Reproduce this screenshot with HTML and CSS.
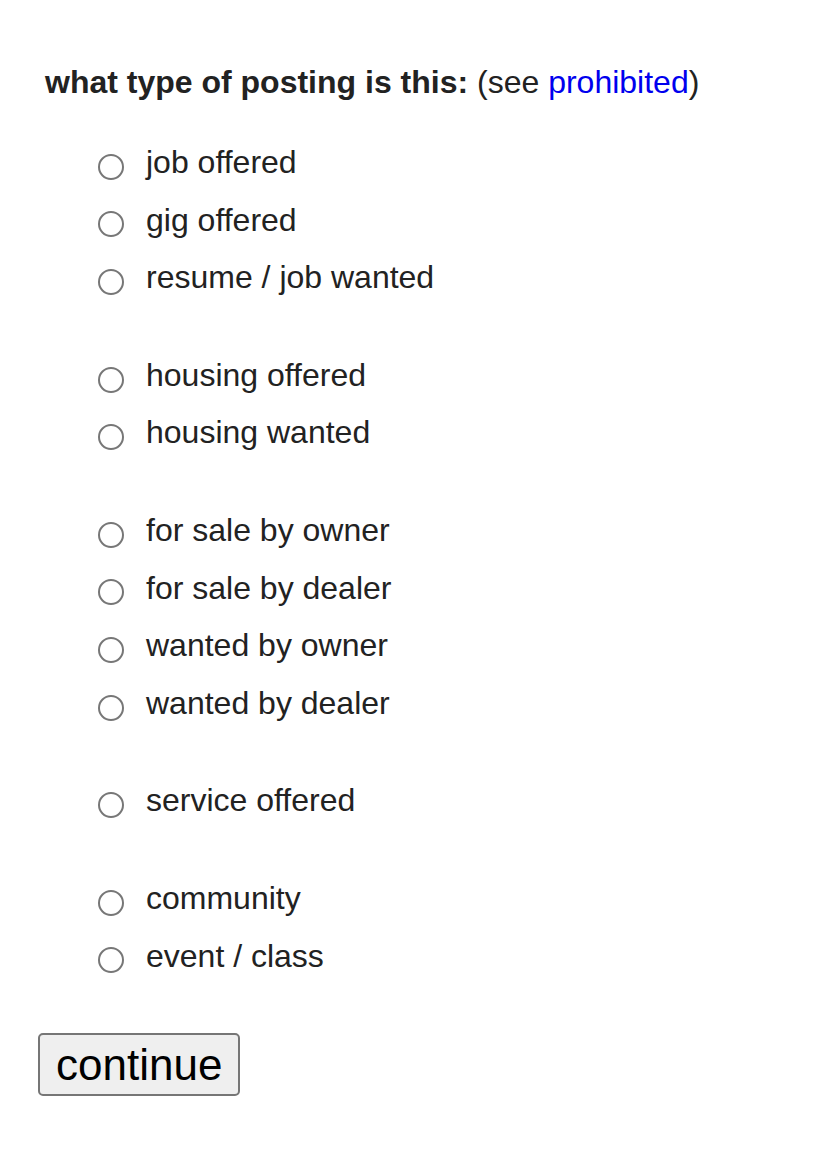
FILE: index.html
```html
<!DOCTYPE html>
<html lang="en">

<head>
    <meta charset="utf-8">
    <title>create posting</title>
    <link rel="stylesheet" href="styles.css">
</head>

<body>
    <form class="pickForm">
        <!-- 标题 -->
        <div class="formHead">
            <b>what type of posting is this:</b>
            (see <a href="#">prohibited</a>)
        </div>

        <!-- jobs -->
        <ul class="pickGroup">
            <li><label><input type="radio" name="id" value="jo"><span>job offered</span></label></li>
            <li><label><input type="radio" name="id" value="go"><span>gig offered</span></label></li>
            <li><label><input type="radio" name="id" value="rw"><span>resume / job wanted</span></label></li>
        </ul>

        <!-- housing -->
        <ul class="pickGroup">
            <li><label><input type="radio" name="id" value="ho"><span>housing offered</span></label></li>
            <li><label><input type="radio" name="id" value="hw"><span>housing wanted</span></label></li>
        </ul>

        <!-- for sale -->
        <ul class="pickGroup">
            <li><label><input type="radio" name="id" value="fso"><span>for sale by owner</span></label></li>
            <li><label><input type="radio" name="id" value="fsd"><span>for sale by dealer</span></label></li>
            <li><label><input type="radio" name="id" value="iwo"><span>wanted by owner</span></label></li>
            <li><label><input type="radio" name="id" value="iwd"><span>wanted by dealer</span></label></li>
        </ul>

        <!-- services -->
        <ul class="pickGroup">
            <li><label><input type="radio" name="id" value="so"><span>service offered</span></label></li>
        </ul>

        <!-- community -->
        <ul class="pickGroup">
            <li><label><input type="radio" name="id" value="c"><span>community</span></label></li>
            <li><label><input type="radio" name="id" value="e"><span>event / class</span></label></li>
        </ul>

        <button type="button" class="pickBtn">continue</button>
    </form>
</body>

</html>
```

FILE: styles.css
```css
* {
    margin: 0;
    padding: 0;
    list-style: none;
}

html,
body {
    font-family: "Liberation Sans", Arial, sans-serif;
    color: #222;
    background: #fff;
}

.pickForm {
    padding: 64px 0 0 38px;
}

.pickForm .formHead {
    font-size: 32px;
    line-height: 37px;
    padding-left: 7px;
}

.pickForm .formHead a {
    color: #00e;
    text-decoration: none;
}

.pickForm .pickGroup {
    margin: 40px 0 0 60px;
}

.pickForm .pickGroup:first-of-type {
    margin-top: 35px;
}

.pickForm .pickGroup label {
    display: flex;
    align-items: center;
    height: 57.6px;
    cursor: pointer;
}

.pickForm .pickGroup input {
    appearance: none;
    -webkit-appearance: none;
    width: 26px;
    height: 26px;
    flex: none;
    border: 2px solid #777;
    border-radius: 50%;
    background: #fff;
    margin: 4px 22px 0 0;
    cursor: pointer;
}

.pickForm .pickGroup input:checked {
    background: radial-gradient(#222 0 6px, #fff 7px);
}

.pickForm .pickGroup span {
    font-size: 32px;
    line-height: 52.6px;
    padding-bottom: 5px;
}

.pickForm .pickBtn {
    display: block;
    margin-top: 46px;
    padding: 5px 16px 4px;
    font-family: "Liberation Sans", Arial, sans-serif;
    font-size: 44px;
    line-height: 50px;
    color: #000;
    background: #efefef;
    border: 2px solid #767676;
    border-radius: 5px;
    cursor: pointer;
}
```
